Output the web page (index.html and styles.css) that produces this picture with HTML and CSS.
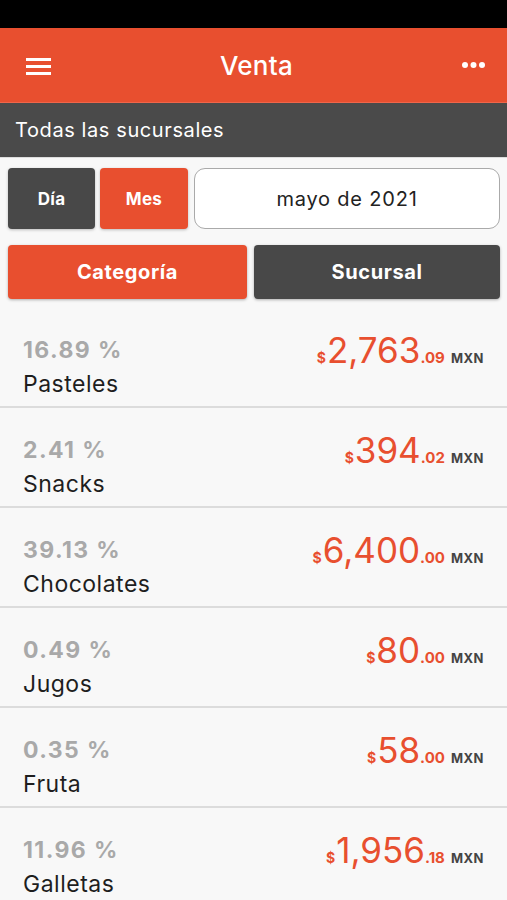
FILE: index.html
```html
<!DOCTYPE html>
<html lang="es">

<head>
  <meta charset="UTF-8">
  <meta name="viewport" content="width=device-width, initial-scale=1.0">
  <title>Venta</title>
  <link rel="stylesheet" href="styles.css">
</head>

<body>
  <div class="statusbar"></div>

  <header class="appbar">
    <svg class="icon" width="26" height="20" viewBox="0 0 26 20">
      <rect x="0" y="3" width="25" height="3" fill="#fff"></rect>
      <rect x="0" y="10" width="25" height="3" fill="#fff"></rect>
      <rect x="0" y="17" width="25" height="3" fill="#fff"></rect>
    </svg>
    <h1 class="title">Venta</h1>
    <svg class="icon" width="26" height="20" viewBox="0 0 26 20">
      <circle cx="4" cy="10" r="3" fill="#fff"></circle>
      <circle cx="12.5" cy="10" r="3" fill="#fff"></circle>
      <circle cx="21" cy="10" r="3" fill="#fff"></circle>
    </svg>
  </header>

  <div class="subbar">Todas las sucursales</div>

  <div class="filters">
    <div class="period">
      <div class="btn btn-dark btn-day">Día</div>
      <div class="btn btn-orange btn-month">Mes</div>
      <div class="date">mayo de 2021</div>
    </div>
    <div class="tabs">
      <div class="tab tab-first btn-orange">Categoría</div>
      <div class="tab btn-dark">Sucursal</div>
    </div>
  </div>

  <ul class="list">
    <li class="item">
      <div class="info">
        <div class="pct">16.89 %</div>
        <div class="name">Pasteles</div>
      </div>
      <div class="amount"><span class="cur">$</span><span class="big">2,763</span><span class="cents">.09</span><span class="mxn">MXN</span></div>
    </li>
    <li class="item">
      <div class="info">
        <div class="pct">2.41 %</div>
        <div class="name">Snacks</div>
      </div>
      <div class="amount"><span class="cur">$</span><span class="big">394</span><span class="cents">.02</span><span class="mxn">MXN</span></div>
    </li>
    <li class="item">
      <div class="info">
        <div class="pct">39.13 %</div>
        <div class="name">Chocolates</div>
      </div>
      <div class="amount"><span class="cur">$</span><span class="big">6,400</span><span class="cents">.00</span><span class="mxn">MXN</span></div>
    </li>
    <li class="item">
      <div class="info">
        <div class="pct">0.49 %</div>
        <div class="name">Jugos</div>
      </div>
      <div class="amount"><span class="cur">$</span><span class="big">80</span><span class="cents">.00</span><span class="mxn">MXN</span></div>
    </li>
    <li class="item">
      <div class="info">
        <div class="pct">0.35 %</div>
        <div class="name">Fruta</div>
      </div>
      <div class="amount"><span class="cur">$</span><span class="big">58</span><span class="cents">.00</span><span class="mxn">MXN</span></div>
    </li>
    <li class="item">
      <div class="info">
        <div class="pct">11.96 %</div>
        <div class="name">Galletas</div>
      </div>
      <div class="amount"><span class="cur">$</span><span class="big">1,956</span><span class="cents">.18</span><span class="mxn">MXN</span></div>
    </li>
  </ul>
</body>

</html>
```

FILE: styles.css
```css
body {
  margin: 0;
  background-color: #f8f8f8;
  font-family: Inter, "Liberation Sans", sans-serif;
  overflow: hidden;
}

.statusbar {
  height: 28px;
  background-color: #000;
}

.appbar {
  display: flex;
  justify-content: space-between;
  align-items: center;
  height: 74px;
  padding: 0 20px 0 26px;
  background-color: #e84f2f;
  border-bottom: 1px solid #f0654a;
}

.appbar .icon {
  display: block;
}

.title {
  margin: 0;
  color: #fff;
  font-size: 26px;
  font-weight: 500;
  letter-spacing: 0.3px;
}

.subbar {
  display: flex;
  align-items: center;
  height: 54px;
  padding-left: 15px;
  background-color: #4a4a4a;
  color: #fff;
  font-size: 20px;
  letter-spacing: 0.6px;
  border-bottom: 1px solid #ddd;
}

.filters {
  padding: 10px 7px 0 8px;
}

.period {
  display: flex;
  gap: 5px;
  height: 61px;
}

.btn {
  display: flex;
  justify-content: center;
  align-items: center;
  border-radius: 4px;
  color: #fff;
  font-size: 17px;
  font-weight: 700;
  letter-spacing: 0.3px;
  box-shadow: 0 1px 3px rgba(0, 0, 0, 0.25);
}

.btn-day {
  width: 87px;
}

.btn-month {
  width: 88px;
}

.btn-dark {
  background-color: #484848;
}

.btn-orange {
  background-color: #e84f2f;
}

.date {
  flex: 1;
  display: flex;
  justify-content: center;
  align-items: center;
  margin-left: 1px;
  background-color: #fff;
  border: 1px solid #aaa;
  border-radius: 11px;
  color: #222;
  font-size: 20px;
  letter-spacing: 0.8px;
}

.tabs {
  display: flex;
  gap: 7px;
  margin-top: 16px;
}

.tab {
  flex: 1;
  display: flex;
  justify-content: center;
  align-items: center;
  height: 54px;
  border-radius: 4px;
  color: #fff;
  font-size: 20px;
  font-weight: 700;
  letter-spacing: 0.6px;
  box-shadow: 0 1px 3px rgba(0, 0, 0, 0.3);
}

.tab-first {
  flex: none;
  width: 239px;
}

.list {
  margin: 9px 0 0;
  padding: 0;
  list-style: none;
}

.item {
  display: flex;
  justify-content: space-between;
  align-items: flex-start;
  height: 98px;
  padding: 0 23px;
  border-bottom: 2px solid #dcdcdc;
}

.info {
  padding-top: 28px;
}

.pct {
  color: #a9a9a9;
  font-size: 23px;
  font-weight: 700;
  line-height: 28px;
  letter-spacing: 1.4px;
}

.name {
  margin-top: 6px;
  color: #1e1e1e;
  font-size: 23px;
  line-height: 28px;
  letter-spacing: 0.5px;
}

.amount {
  display: flex;
  align-items: baseline;
  padding-top: 22px;
  color: #e84f2f;
}

.cur {
  font-size: 14px;
  font-weight: 700;
}

.big {
  font-size: 35px;
  line-height: 40px;
  margin-left: 1px;
}

.cents {
  font-size: 15px;
  font-weight: 700;
}

.mxn {
  margin-left: 6px;
  color: #444;
  font-size: 13px;
  font-weight: 700;
  letter-spacing: 0.5px;
}
```
